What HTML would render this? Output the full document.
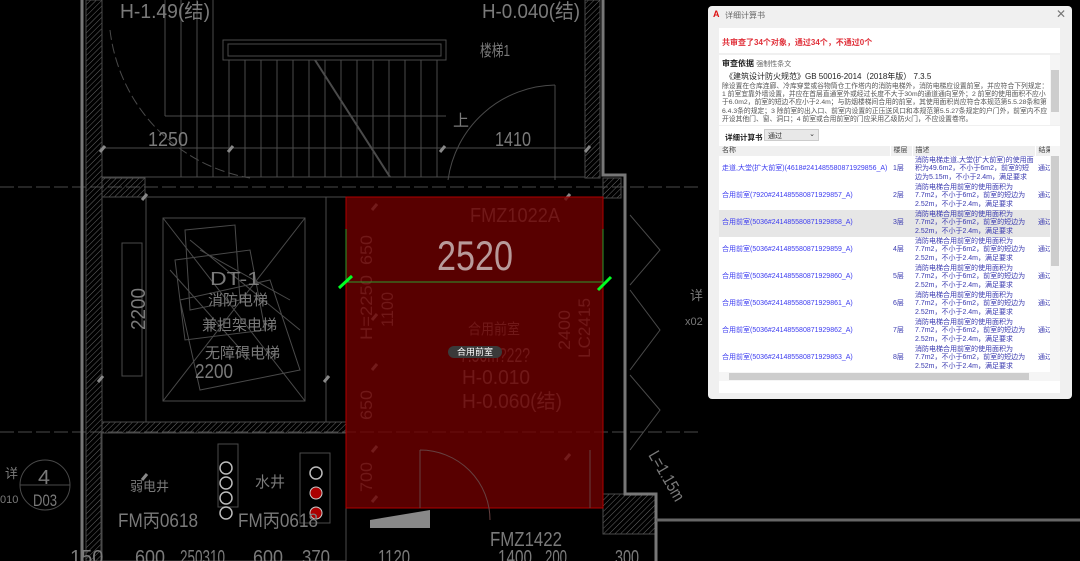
<!DOCTYPE html>
<html><head><meta charset="utf-8"><style>
*{margin:0;padding:0;box-sizing:border-box}
body{width:1080px;height:561px;background:#000;overflow:hidden;position:relative;font-family:"Liberation Sans","Noto Sans CJK SC",sans-serif}
svg{position:absolute;left:0;top:0}
.dlg{position:absolute;left:708px;top:6px;width:364px;height:393px;background:#f0f0f0;border-radius:4px;box-shadow:0 0 6px rgba(0,0,0,.5);font-size:7px;color:#333}
.t{position:absolute;left:17px;top:4px;font-size:8px;color:#666}
.ico{position:absolute;left:5px;top:3px;color:#d11;font-weight:bold;font-size:9px}
.x{position:absolute;right:6px;top:1px;font-size:12px;color:#777}
.b1{position:absolute;left:11px;top:22px;width:341px;height:25px;background:#fff;color:#e0303a;font-weight:bold;font-size:8px;padding:9px 0 0 3px}
.b2{position:absolute;left:11px;top:49px;width:341px;height:70px;background:#fff;padding:3px 12px 0 3px;overflow:hidden}
.sb{position:absolute;right:0;top:0;width:10px;height:70px;background:#f5f5f5}
.sb i{position:absolute;left:1px;top:15px;width:8px;height:42px;background:#cdcdcd}
.b3{position:absolute;left:11px;top:120px;width:341px;height:267px;background:#fff}
.tw{position:absolute;left:0;top:20px;width:331px;height:226px;overflow:hidden}
table{border-collapse:collapse;width:331px;table-layout:fixed}
td,th{font-size:7px;font-weight:normal;text-align:left;vertical-align:middle;padding:0 3px;line-height:8.5px;white-space:nowrap;overflow:hidden}
th{background:#f0f0f0;height:10px;color:#444;border-right:1px solid #fff}
td{height:27px;color:#3a3ab0}
td.n{color:#3c3cf0}
tr.h td{background:#e6e6e6}
</style></head><body>
<svg width="1080" height="561" viewBox="0 0 1080 561">
<defs><pattern id="hp" width="4" height="4" patternUnits="userSpaceOnUse" patternTransform="rotate(45)"><line x1="0" y1="0" x2="0" y2="4" stroke="#666" stroke-width="1"/></pattern></defs>
<g stroke="#4a4a4a" fill="none" stroke-width="1">
<line x1="0" y1="187" x2="700" y2="187" stroke-dasharray="14 4"/>
<line x1="0" y1="432" x2="700" y2="432" stroke-dasharray="14 4"/>
<rect x="86" y="0" width="16" height="561" fill="url(#hp)"/>
<rect x="102" y="178" width="43" height="19" fill="url(#hp)"/>
<rect x="102" y="422" width="244" height="11" fill="url(#hp)"/>
<rect x="585" y="0" width="15" height="178" fill="url(#hp)"/>
<rect x="603" y="178" width="18" height="20" fill="url(#hp)"/>
<rect x="603" y="494" width="52" height="40" fill="url(#hp)"/>
<rect x="223" y="40" width="223" height="20"/><rect x="228" y="44" width="213" height="12"/>
<path d="M165 0V116M181 0V177M197 0V177M213 0V177M229 60V177M245 60V177M261 60V177M277 60V177M293 60V177M309 60V177M325 60V177M341 60V177M357 60V177M373 60V177M389 60V177M405 60V177M421 60V177M437 60V177"/>
<line x1="165" y1="116" x2="446" y2="116"/>
<line x1="100" y1="148" x2="585" y2="148"/>
<line x1="102" y1="177" x2="585" y2="177"/>
<path d="M315 60L390 177" stroke-width="2"/>
<path d="M110 30A170 170 0 0 0 250 178" stroke-dasharray="10 4"/>
<path d="M555 85A110 110 0 0 0 448 180"/>
<line x1="555" y1="85" x2="555" y2="180"/>
<rect x="102" y="197" width="244" height="225"/>
<rect x="146" y="197" width="180" height="225"/>
<rect x="163" y="218" width="142" height="183"/>
<path d="M163 218L305 401M305 218L163 401"/>
<rect x="122" y="243" width="20" height="133"/>
<path d="M185 230L235 225L240 300L190 310ZM175 260L250 250L265 330L185 340ZM180 300L270 280L300 370L200 390ZM190 240L300 330M200 250L290 300M170 270L250 360"/>
<rect x="101" y="433" width="245" height="128"/>
<rect x="218" y="444" width="20" height="63"/>
<rect x="300" y="453" width="30" height="70"/>
<circle cx="45" cy="485" r="25"/>
<line x1="20" y1="485" x2="70" y2="485"/>
<path d="M603 0V175H625V494H656V561" stroke="#777" stroke-width="3"/>
<path d="M82 0V561" stroke="#777" stroke-width="3"/>
<path d="M630 215L660 250L630 285M630 290L660 330L630 370M630 375L660 410L630 450"/>
<line x1="656" y1="520" x2="1080" y2="520" stroke="#666" stroke-width="3"/>
</g>
<g fill="none" stroke="#bbb" stroke-width="1.5">
<circle cx="226" cy="468" r="6"/><circle cx="226" cy="483" r="6"/><circle cx="226" cy="498" r="6"/><circle cx="226" cy="513" r="6"/>
<circle cx="316" cy="473" r="6"/>
</g>
<g fill="#a00" stroke="#ccc"><circle cx="316" cy="493" r="6"/><circle cx="316" cy="513" r="6"/></g>
<g stroke="#888" stroke-width="3"><path d="M100 152l5 -6M228 152l5 -6M440 152l5 -6M585 152l5 -6M142 200l5-6M142 480l5-6M98 382l5-6M324 382l5-6M372 210l5-6M372 320l5-6M372 370l5-6M372 452l5-6M372 502l5-6M565 200l5-6M565 460l5-6"/></g>
<g fill="#7a7a7a" font-family="Liberation Sans,Noto Sans CJK SC,sans-serif" lengthAdjust="spacingAndGlyphs">
<text x="120" y="18" font-size="20" textLength="90" lengthAdjust="spacingAndGlyphs">H-1.49(结)</text>
<text x="482" y="18" font-size="20" textLength="98" lengthAdjust="spacingAndGlyphs">H-0.040(结)</text>
<text x="480" y="56" font-size="16" textLength="30" lengthAdjust="spacingAndGlyphs">楼梯1</text>
<text x="148" y="146" font-size="20" textLength="40" lengthAdjust="spacingAndGlyphs">1250</text>
<text x="495" y="146" font-size="20" textLength="36" lengthAdjust="spacingAndGlyphs">1410</text>
<text x="453" y="126" font-size="16">上</text>
<text x="470" y="222" font-size="20" textLength="90" lengthAdjust="spacingAndGlyphs">FMZ1022A</text>
<text x="468" y="334" font-size="15" textLength="52" lengthAdjust="spacingAndGlyphs">合用前室</text>
<text x="460" y="362" font-size="20" textLength="70" lengthAdjust="spacingAndGlyphs">7.50m?22?</text>
<text x="462" y="384" font-size="20" textLength="68" lengthAdjust="spacingAndGlyphs">H-0.010</text>
<text x="462" y="408" font-size="20" textLength="100" lengthAdjust="spacingAndGlyphs">H-0.060(结)</text>
<text x="490" y="546" font-size="20" textLength="72" lengthAdjust="spacingAndGlyphs">FMZ1422</text>
<text x="210" y="285" font-size="18" textLength="50" lengthAdjust="spacingAndGlyphs">DT-1</text>
<text x="208" y="305" font-size="15">消防电梯</text>
<text x="202" y="330" font-size="15">兼担架电梯</text>
<text x="205" y="358" font-size="15">无障碍电梯</text>
<text x="195" y="378" font-size="20" textLength="38" lengthAdjust="spacingAndGlyphs">2200</text>
<text x="255" y="487" font-size="15">水井</text>
<text x="130" y="491" font-size="13">弱电井</text>
<text x="118" y="527" font-size="19" textLength="80" lengthAdjust="spacingAndGlyphs">FM丙0618</text>
<text x="238" y="527" font-size="19" textLength="80" lengthAdjust="spacingAndGlyphs">FM丙0618</text>
<g font-size="20"><text x="70" y="564">150</text><text x="135" y="564" textLength="30" lengthAdjust="spacingAndGlyphs">600</text><text x="180" y="564" textLength="45" lengthAdjust="spacingAndGlyphs">250310</text><text x="253" y="564" textLength="30" lengthAdjust="spacingAndGlyphs">600</text><text x="302" y="564" textLength="28" lengthAdjust="spacingAndGlyphs">370</text><text x="378" y="564" textLength="32" lengthAdjust="spacingAndGlyphs">1120</text><text x="498" y="564" textLength="34" lengthAdjust="spacingAndGlyphs">1400</text><text x="545" y="564" textLength="22" lengthAdjust="spacingAndGlyphs">200</text><text x="615" y="564" textLength="24" lengthAdjust="spacingAndGlyphs">300</text></g>
<text x="5" y="478" font-size="13">详</text>
<text x="38" y="484" font-size="20" textLength="12" lengthAdjust="spacingAndGlyphs">4</text>
<text x="33" y="506" font-size="17" textLength="24" lengthAdjust="spacingAndGlyphs">D03</text>
<text x="0" y="503" font-size="11">010</text>
<text x="690" y="300" font-size="13">详</text>
<text x="685" y="325" font-size="11">x02</text>
<text transform="translate(145,330) rotate(-90)" font-size="20" textLength="42" lengthAdjust="spacingAndGlyphs">2200</text>
<text transform="translate(372,265) rotate(-90)" font-size="17" textLength="30" lengthAdjust="spacingAndGlyphs">650</text>
<text transform="translate(372,420) rotate(-90)" font-size="17" textLength="30" lengthAdjust="spacingAndGlyphs">650</text>
<text transform="translate(372,492) rotate(-90)" font-size="17" textLength="30" lengthAdjust="spacingAndGlyphs">700</text>
<text transform="translate(372,340) rotate(-90)" font-size="17" textLength="65" lengthAdjust="spacingAndGlyphs">H=2250</text>
<text transform="translate(393,327) rotate(-90)" font-size="17" textLength="35" lengthAdjust="spacingAndGlyphs">1100</text>
<text transform="translate(570,350) rotate(-90)" font-size="17" textLength="40" lengthAdjust="spacingAndGlyphs">2400</text>
<text transform="translate(590,358) rotate(-90)" font-size="17" textLength="60" lengthAdjust="spacingAndGlyphs">LC2415</text>
<text transform="translate(648,455) rotate(60)" font-size="17" textLength="55" lengthAdjust="spacingAndGlyphs">L=1.15m</text>
</g>
<rect x="346" y="197" width="257" height="311" fill="rgba(110,0,0,0.8)" stroke="#b00000" stroke-width="1"/>
<path d="M420 450V508M420 450A70 70 0 0 1 490 520M590 450V508" stroke="#664040" fill="none"/>
<path d="M370 520L430 510V528H370Z" fill="#888"/>
<text x="437" y="270" font-size="42" fill="#b89a9a" font-family="Liberation Sans,sans-serif" textLength="76" lengthAdjust="spacingAndGlyphs">2520</text>
<path d="M346 229V282H603V229" stroke="#2c9a2c" fill="none" stroke-width="1"/>
<path d="M339 288L352 276M598 290L611 277" stroke="#00ff22" stroke-width="3"/>
<rect x="448" y="346" width="54" height="12" rx="6" fill="#3a3a3a"/>
<text x="475" y="355" font-size="9" fill="#fff" text-anchor="middle" font-family="Noto Sans CJK SC,sans-serif">合用前室</text>
</svg>
<div class="dlg">
<div class="ico">A</div><div class="t">详细计算书</div><div class="x">✕</div>
<div class="b1">共审查了34个对象，通过34个，不通过0个</div>
<div class="b2"><div style="font-size:8px;color:#222;line-height:11px"><b>审查依据</b> <span style="font-size:7px;color:#666">强制性条文</span></div>
<div style="font-size:8px;color:#222;margin:1px 0 1px 3px;line-height:11px">《建筑设计防火规范》GB 50016-2014（2018年版） 7.3.5</div>
<div style="color:#555;font-size:6.8px;line-height:8.2px;white-space:nowrap">除设置在仓库连廊、冷库穿堂或谷物筒仓工作塔内的消防电梯外，消防电梯应设置前室，并应符合下列规定：<br>1 前室宜靠外墙设置，并应在首层直通室外或经过长度不大于30m的通道通向室外；2 前室的使用面积不应小<br>于6.0m2，前室的短边不应小于2.4m；与防烟楼梯间合用的前室，其使用面积尚应符合本规范第5.5.28条和第<br>6.4.3条的规定；3 除前室的出入口、前室内设置的正压送风口和本规范第5.5.27条规定的户门外，前室内不应<br>开设其他门、窗、洞口；4 前室或合用前室的门应采用乙级防火门，不应设置卷帘。</div>
<div class="sb"><i></i></div></div>
<div class="b3">
<div style="position:absolute;left:6px;top:6px;font-size:7.5px;font-weight:bold;color:#222">详细计算书</div>
<div style="position:absolute;left:45px;top:3px;width:55px;height:12px;background:#e8e8e8;border:1px solid #ccc;font-size:7px;padding:1px 3px">通过<span style="position:absolute;right:3px;top:0">⌄</span></div>
<div class="tw"><table><colgroup><col style="width:171px"><col style="width:22px"><col style="width:123px"><col style="width:15px"></colgroup>
<tr><th>名称</th><th>楼层</th><th>描述</th><th>结果</th></tr>
<tr><td class="n">走道,大堂(扩大前室)(4618#241485580871929856_A)</td><td>1层</td><td>消防电梯走道,大堂(扩大前室)的使用面<br>积为49.6m2，不小于6m2，前室的短<br>边为5.15m，不小于2.4m，满足要求</td><td>通过</td></tr>
<tr><td class="n">合用前室(7920#241485580871929857_A)</td><td>2层</td><td>消防电梯合用前室的使用面积为<br>7.7m2，不小于6m2，前室的短边为<br>2.52m，不小于2.4m，满足要求</td><td>通过</td></tr>
<tr class="h"><td class="n">合用前室(5036#241485580871929858_A)</td><td>3层</td><td>消防电梯合用前室的使用面积为<br>7.7m2，不小于6m2，前室的短边为<br>2.52m，不小于2.4m，满足要求</td><td>通过</td></tr>
<tr><td class="n">合用前室(5036#241485580871929859_A)</td><td>4层</td><td>消防电梯合用前室的使用面积为<br>7.7m2，不小于6m2，前室的短边为<br>2.52m，不小于2.4m，满足要求</td><td>通过</td></tr>
<tr><td class="n">合用前室(5036#241485580871929860_A)</td><td>5层</td><td>消防电梯合用前室的使用面积为<br>7.7m2，不小于6m2，前室的短边为<br>2.52m，不小于2.4m，满足要求</td><td>通过</td></tr>
<tr><td class="n">合用前室(5036#241485580871929861_A)</td><td>6层</td><td>消防电梯合用前室的使用面积为<br>7.7m2，不小于6m2，前室的短边为<br>2.52m，不小于2.4m，满足要求</td><td>通过</td></tr>
<tr><td class="n">合用前室(5036#241485580871929862_A)</td><td>7层</td><td>消防电梯合用前室的使用面积为<br>7.7m2，不小于6m2，前室的短边为<br>2.52m，不小于2.4m，满足要求</td><td>通过</td></tr>
<tr><td class="n">合用前室(5036#241485580871929863_A)</td><td>8层</td><td>消防电梯合用前室的使用面积为<br>7.7m2，不小于6m2，前室的短边为<br>2.52m，不小于2.4m，满足要求</td><td>通过</td></tr>
</table></div>
<div style="position:absolute;left:331px;top:20px;width:10px;height:226px;background:#f5f5f5"><div style="position:absolute;left:1px;top:10px;width:8px;height:110px;background:#cdcdcd"></div></div>
<div style="position:absolute;left:0;top:246px;width:341px;height:9px;background:#f5f5f5"><div style="position:absolute;left:10px;top:1px;width:300px;height:7px;background:#cdcdcd"></div></div>
</div>
</div>
</body></html>
